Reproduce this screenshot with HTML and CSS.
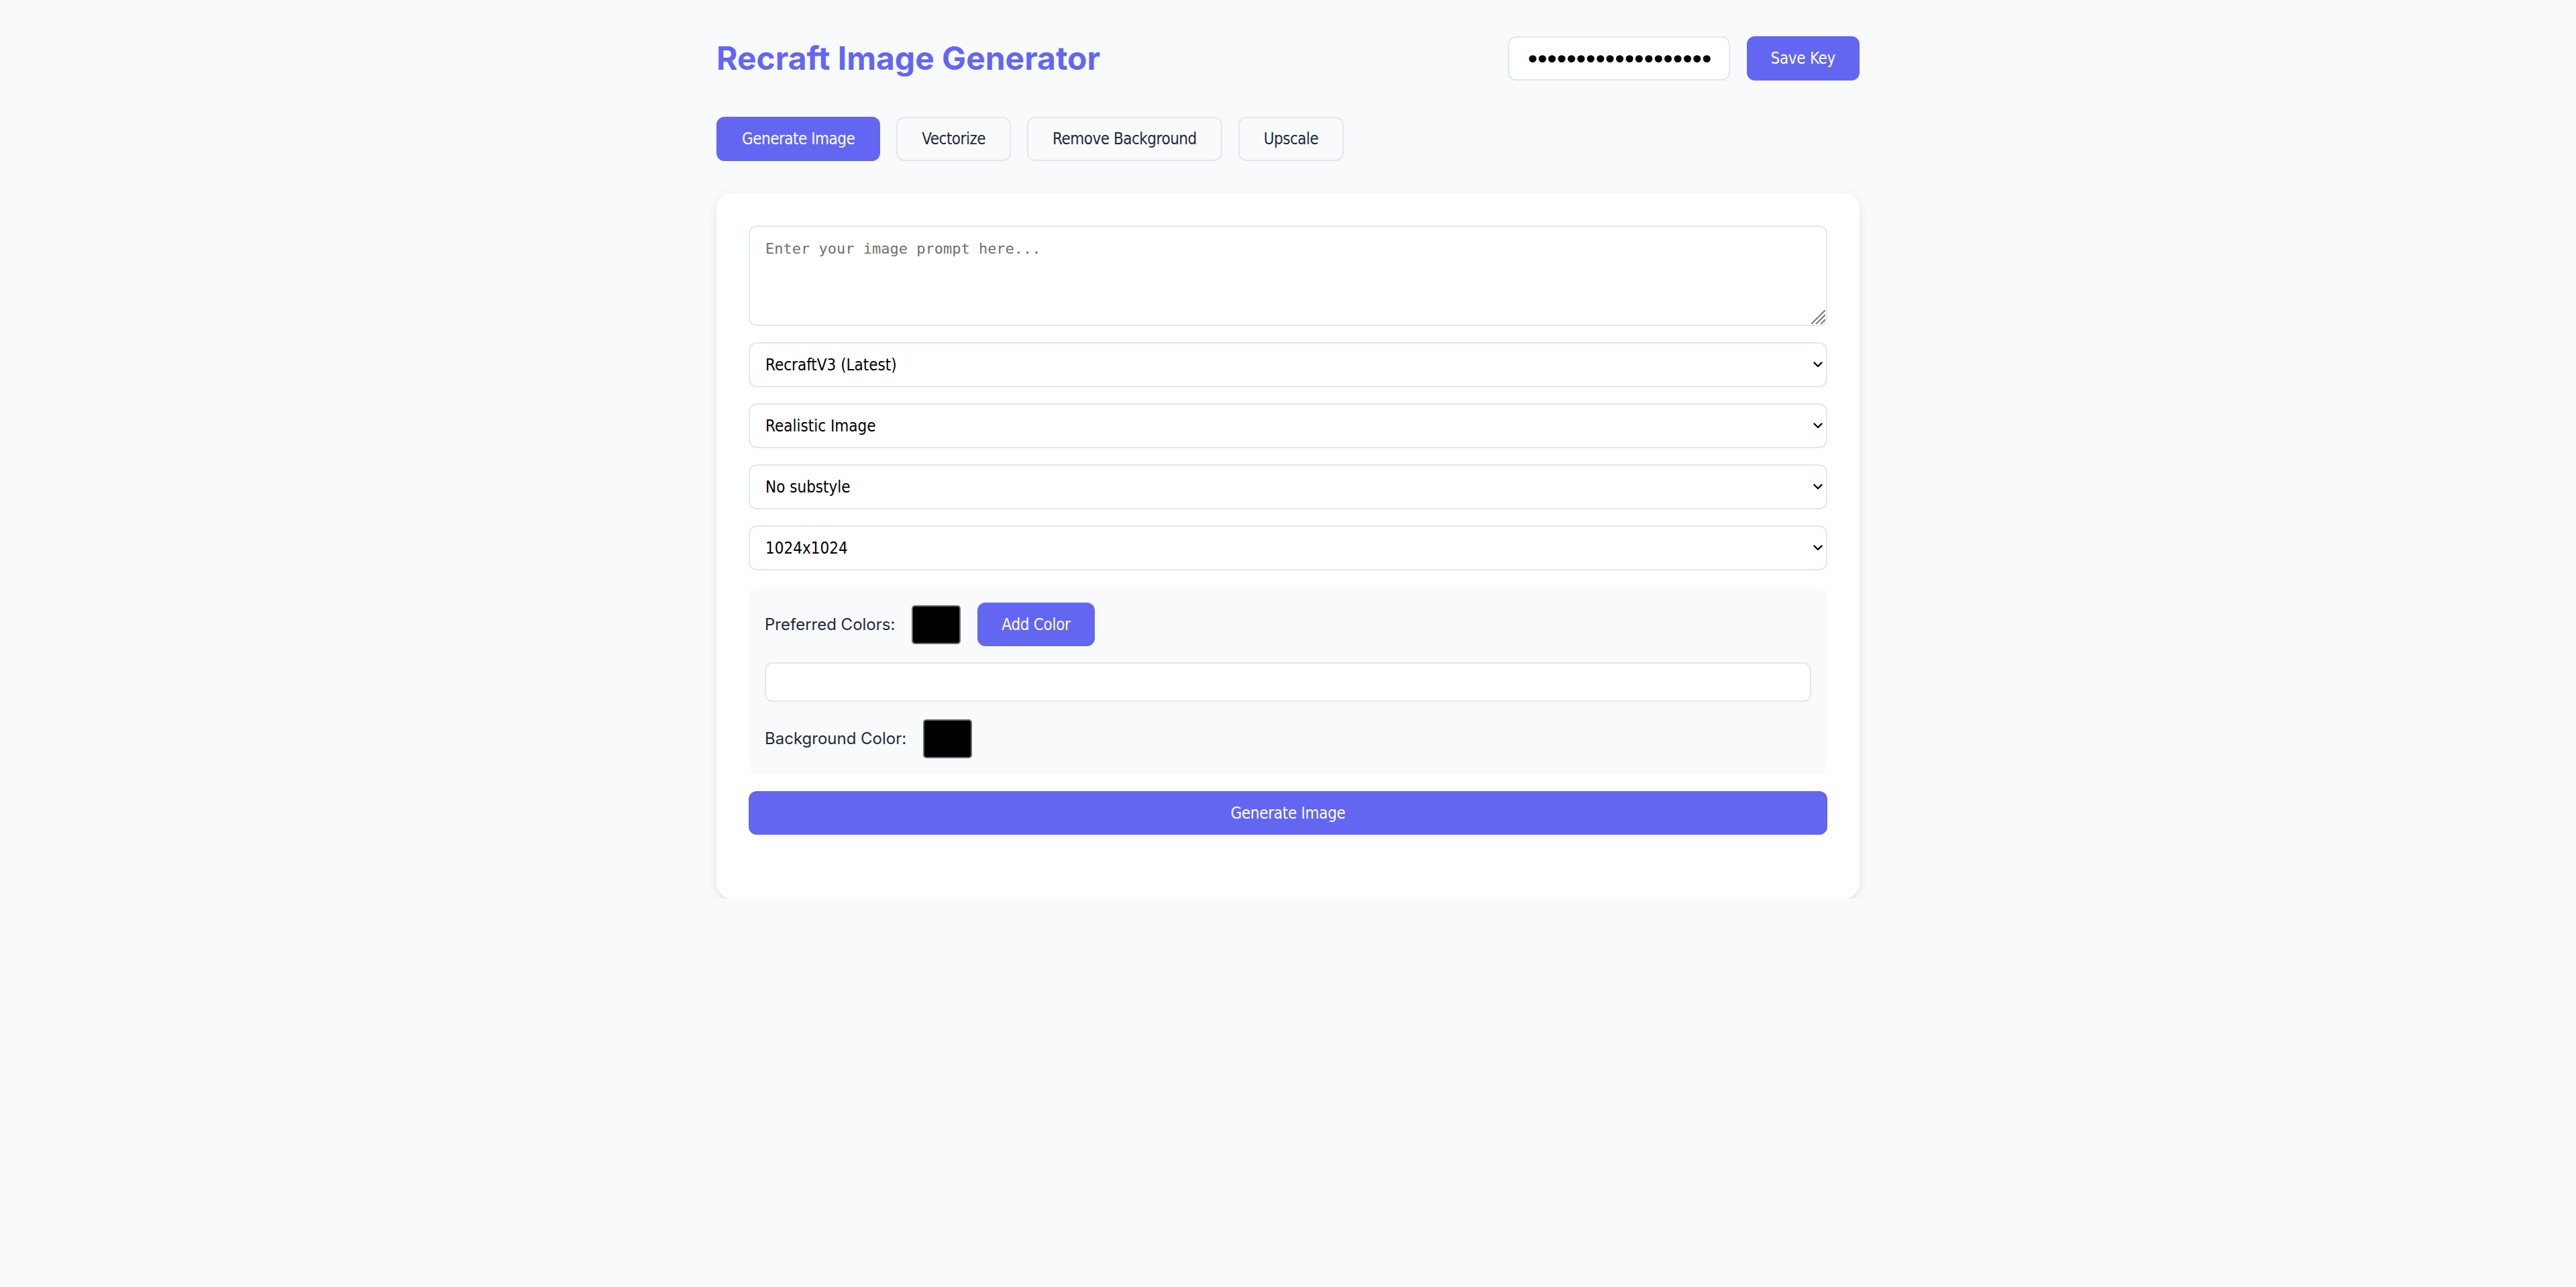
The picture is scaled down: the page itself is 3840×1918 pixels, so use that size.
FILE: index.html
```html
<!DOCTYPE html>
<html lang="en">
<head>
<meta charset="utf-8">
<title>Recraft Image Generator</title>
<link rel="stylesheet" href="styles.css">
</head>
<body>
<div class="app">
  <header class="topbar">
    <h1 class="title">Recraft Image Generator</h1>
    <div class="key">
      <input class="key-input" type="password" value="abcdefghijklmnopqrstuvwxyz0123456789abcd">
      <button class="btn btn-primary">Save Key</button>
    </div>
  </header>

  <nav class="tabs">
    <button class="tab tab-active">Generate Image</button>
    <button class="tab">Vectorize</button>
    <button class="tab">Remove Background</button>
    <button class="tab">Upscale</button>
  </nav>

  <main class="card">
    <div class="prompt-wrap">
      <textarea class="prompt" placeholder="Enter your image prompt here..."></textarea>
      <svg class="grip" width="21" height="21" viewBox="0 0 21 21"><g stroke="#7a7a7a" stroke-width="2" stroke-linecap="butt"><line x1="21" y1="0" x2="0" y2="21"/><line x1="21" y1="7" x2="7" y2="21"/><line x1="21" y1="14" x2="14" y2="21"/></g></svg>
    </div>

    <div class="select-wrap">
      <select class="select"><option>RecraftV3 (Latest)</option></select>
      <svg class="chev" width="14" height="9" viewBox="0 0 14 9"><polyline points="1.5,1.5 7,7 12.5,1.5" fill="none" stroke="#000" stroke-width="2.4" stroke-linecap="round" stroke-linejoin="round"/></svg>
    </div>
    <div class="select-wrap">
      <select class="select"><option>Realistic Image</option></select>
      <svg class="chev" width="14" height="9" viewBox="0 0 14 9"><polyline points="1.5,1.5 7,7 12.5,1.5" fill="none" stroke="#000" stroke-width="2.4" stroke-linecap="round" stroke-linejoin="round"/></svg>
    </div>
    <div class="select-wrap">
      <select class="select"><option>No substyle</option></select>
      <svg class="chev" width="14" height="9" viewBox="0 0 14 9"><polyline points="1.5,1.5 7,7 12.5,1.5" fill="none" stroke="#000" stroke-width="2.4" stroke-linecap="round" stroke-linejoin="round"/></svg>
    </div>
    <div class="select-wrap">
      <select class="select"><option>1024x1024</option></select>
      <svg class="chev" width="14" height="9" viewBox="0 0 14 9"><polyline points="1.5,1.5 7,7 12.5,1.5" fill="none" stroke="#000" stroke-width="2.4" stroke-linecap="round" stroke-linejoin="round"/></svg>
    </div>

    <section class="colors">
      <div class="color-row color-row-top">
        <span class="label">Preferred Colors:</span>
        <span class="swatch"></span>
        <button class="btn btn-primary btn-add">Add Color</button>
      </div>
      <input class="color-list" type="text">
      <div class="color-row">
        <span class="label">Background Color:</span>
        <span class="swatch"></span>
      </div>
    </section>

    <button class="btn btn-primary btn-block">Generate Image</button>
  </main>
</div>
</body>
</html>
```

FILE: styles.css
```css
* {
  box-sizing: border-box;
}

html,
body {
  margin: 0;
  padding: 0;
  background: #f8fafc;
}

body {
  font-family: Inter, "Liberation Sans", sans-serif;
  color: #1e293b;
}

.app {
  width: 1704px;
  margin: 0 auto;
  padding-top: 53px;
}

/* header */
.topbar {
  display: flex;
  align-items: center;
  justify-content: space-between;
  height: 67px;
}

.title {
  margin: 0;
  font-family: Inter, "Liberation Sans", sans-serif;
  font-weight: 700;
  font-size: 48px;
  line-height: 1;
  color: #6366f1;
}

.key {
  display: flex;
  align-items: center;
  gap: 25px;
}

.key-input {
  width: 331px;
  height: 66px;
  padding: 4px 24px 0;
  border: 2px solid #e2e8f0;
  border-radius: 12px;
  background: #fff;
  font-family: "DejaVu Sans", sans-serif;
  font-size: 38px;
  letter-spacing: -8px;
  color: #000;
  outline: none;
}

/* buttons */
.btn {
  font-family: "DejaVu Sans Condensed", "DejaVu Sans", sans-serif;
  font-stretch: condensed;
  font-size: 24px;
  letter-spacing: -0.3px;
  border: none;
  border-radius: 12px;
  cursor: pointer;
  padding: 0 36px;
  height: 66px;
}

.btn-primary {
  background: #6366f1;
  color: #fff;
}

.btn-add {
  height: 65px;
}

.btn-block {
  width: 100%;
  height: 65px;
}

/* tabs */
.tabs {
  display: flex;
  gap: 24px;
  margin-top: 54px;
}

.tab {
  height: 66px;
  padding: 0 36px;
  border: 2px solid #e2e8f0;
  border-radius: 12px;
  background: #f8fafc;
  color: #1e293b;
  font-family: "DejaVu Sans Condensed", "DejaVu Sans", sans-serif;
  font-stretch: condensed;
  font-size: 24px;
  letter-spacing: -0.5px;
  cursor: pointer;
}

.tab-active {
  background: #6366f1;
  border-color: #6366f1;
  color: #fff;
}

/* card */
.card {
  margin-top: 48px;
  background: #fff;
  border-radius: 24px;
  padding: 48px 48px 95px;
  box-shadow: 0 4px 14px rgba(15, 23, 42, 0.09);
  display: flex;
  flex-direction: column;
  gap: 24px;
}

.prompt-wrap {
  position: relative;
}

.prompt {
  display: block;
  width: 100%;
  height: 150px;
  padding: 20px 23px;
  border: 2px solid #e2e8f0;
  border-radius: 12px;
  font-family: "DejaVu Sans Mono", monospace;
  font-size: 22px;
  color: #000;
  resize: none;
  outline: none;
}

.prompt::placeholder {
  color: #707070;
}

.grip {
  position: absolute;
  right: 3px;
  bottom: 3px;
  pointer-events: none;
}

.select-wrap {
  position: relative;
}

.select {
  display: block;
  width: 100%;
  height: 67px;
  padding: 0 23px;
  border: 2px solid #e2e8f0;
  border-radius: 12px;
  background: #fff;
  color: #000;
  font-family: "DejaVu Sans Condensed", "DejaVu Sans", sans-serif;
  font-stretch: condensed;
  font-size: 24px;
  appearance: none;
  -webkit-appearance: none;
  outline: none;
}

.chev {
  position: absolute;
  right: 7px;
  top: 29px;
  pointer-events: none;
}

/* colours panel */
.colors {
  background: #f8fafc;
  border-radius: 16px;
  padding: 24px;
  display: flex;
  flex-direction: column;
  gap: 24px;
}

.color-row {
  display: flex;
  align-items: center;
  gap: 25px;
  min-height: 61px;
}

.label {
  font-family: Inter, "Liberation Sans", sans-serif;
  font-size: 24px;
  color: #1e293b;
}

.swatch {
  display: block;
  width: 73px;
  height: 58px;
  background: #000;
  border: 2px solid #6b6b6b;
  border-radius: 5px;
}

.color-list {
  display: block;
  width: 100%;
  height: 59px;
  border: 2px solid #e2e8f0;
  border-radius: 12px;
  background: #fff;
  outline: none;
}
```
